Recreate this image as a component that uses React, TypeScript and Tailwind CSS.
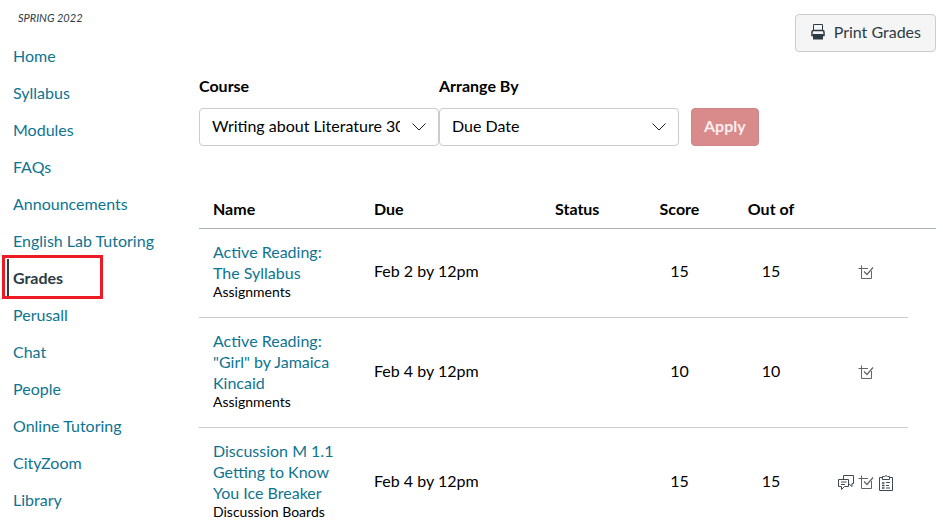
import React from "react";

const navItems = [
  "Home",
  "Syllabus",
  "Modules",
  "FAQs",
  "Announcements",
  "English Lab Tutoring",
  "Grades",
  "Perusall",
  "Chat",
  "People",
  "Online Tutoring",
  "CityZoom",
  "Library",
];

type Grade = {
  title: string;
  group: string;
  due: string;
  score: number;
  outOf: number;
  discussed?: boolean;
};

const grades: Grade[] = [
  { title: "Active Reading: The Syllabus", group: "Assignments", due: "Feb 2 by 12pm", score: 15, outOf: 15 },
  { title: 'Active Reading: "Girl" by Jamaica Kincaid', group: "Assignments", due: "Feb 4 by 12pm", score: 10, outOf: 10 },
  {
    title: "Discussion M 1.1 Getting to Know You Ice Breaker",
    group: "Discussion Boards",
    due: "Feb 4 by 12pm",
    score: 15,
    outOf: 15,
    discussed: true,
  },
];

function PrinterIcon() {
  return (
    <svg viewBox="0 0 16 16" className="size-4" fill="none" stroke="currentColor" aria-hidden="true">
      <path d="M3.5 6.500V.5h9v6" />
      <path d="M3.500 11.500H2V8q0-1.500 1.500-1.500h9Q14 6.500 14 8v3.500h-1.500" strokeWidth="1.5" />
      <path d="M3 10h10v5.500H3z" fill="currentColor" stroke="none" />
    </svg>
  );
}

function ChevronIcon() {
  return (
    <svg viewBox="0 0 16 16" className="pointer-events-none absolute top-1/2 right-3 size-4 -translate-y-1/2" fill="none" stroke="#1a1a1a" aria-hidden="true">
      <path d="M1.500 4.500 8 11l6.500-6.500" />
    </svg>
  );
}

function RubricCheckIcon() {
  return (
    <svg viewBox="0 0 16 16" className="size-4" fill="none" stroke="currentColor" aria-hidden="true">
      <path d="M.5 3.500H10M3.500.5v13h10V6" />
      <path d="m6 6.500 3 3 6-7" strokeWidth="1.2" />
    </svg>
  );
}

function CommentsIcon() {
  return (
    <svg viewBox="0 0 16 16" className="size-4" fill="none" stroke="currentColor" aria-hidden="true">
      <path d="M5.500 4.500v-4h10v8H14v3L11 9" />
      <path d="M.5 4.500h10v7H6.500l-3 3v-3h-3zM3 7h5.500M3 9.500h4" />
    </svg>
  );
}

function ClipboardIcon() {
  return (
    <svg viewBox="0 0 16 16" className="size-4" fill="none" stroke="currentColor" aria-hidden="true">
      <path d="M4.500 2.500h-3v13h13v-13h-3" />
      <path d="M4.500 4.500v-3h2q1.500-2 3 0h2v3z" />
      <path d="M4 8h2.500M4 10.500h2.500M4 13h2.500" strokeWidth="1.6" />
      <path d="M8 7.500h4M8 10.500h3M8 13h4" />
    </svg>
  );
}

function SelectField({ id, label, options }: { id: string; label: string; options: string[] }) {
  return (
    <div className="w-60">
      <label htmlFor={id} className="block leading-5 font-bold">
        {label}
      </label>
      <div className="relative mt-3">
        <select
          id={id}
          className="h-[38px] w-full appearance-none rounded border border-[#c7cdd1] bg-white pr-[38px] pb-0.5 pl-3 text-black"
        >
          {options.map((option) => (
            <option key={option}>{option}</option>
          ))}
        </select>
        <ChevronIcon />
      </div>
    </div>
  );
}

function Sidebar() {
  return (
    <nav aria-label="Course" className="w-48 shrink-0 pt-[9px]">
      <p className="pl-[18px] text-[11px] leading-[18px] text-[#2d3b45] italic">SPRING 2022</p>
      <ul className="mt-2.5">
        {navItems.map((item) =>
          item === "Grades" ? (
            <li key={item} className="relative pl-[7px]">
              <a href="#grades" aria-current="page" className="block border-l-2 border-[#2d3b45] py-2 pl-1 leading-[21px] font-bold text-[#2d3b45]">
                {item}
              </a>
              <span className="pointer-events-none absolute -top-1 left-0.5 h-11 w-[101px] border-3 border-[#ed1c24]" />
            </li>
          ) : (
            <li key={item}>
              <a href="#" className="block py-2 pl-[13px] leading-[21px] text-[#0e7490]">
                {item}
              </a>
            </li>
          ),
        )}
      </ul>
    </nav>
  );
}

function GradesTable() {
  const head = "border-b border-[#a5afb5] px-3.5 pt-[7px] pb-[9px] leading-[21px] font-bold";
  const cell = "border-b border-[#c7cdd1] px-3.5 pt-3 pb-4";
  return (
    <table id="grades" className="mt-[45px] w-full table-fixed border-separate border-spacing-0">
      <colgroup>
        <col className="w-[161px]" />
        <col />
        <col className="w-[93px]" />
        <col className="w-[91px]" />
        <col className="w-[92px]" />
        <col className="w-[91px]" />
        <col className="w-7" />
      </colgroup>
      <thead>
        <tr>
          <th scope="col" className={`${head} text-left`}>Name</th>
          <th scope="col" className={`${head} text-left`}>Due</th>
          <th scope="col" className={`${head} text-left`}>Status</th>
          <th scope="col" className={`${head} text-center`}>Score</th>
          <th scope="col" className={`${head} text-center`}>Out of</th>
          <td colSpan={2} className="border-b border-[#a5afb5]" />
        </tr>
      </thead>
      <tbody>
        {grades.map((grade) => (
          <tr key={grade.title}>
            <th scope="row" className={`${cell} text-left font-normal`}>
              <a href="#" className="block leading-[21px] text-[#0e7490]">
                {grade.title}
              </a>
              <div className="text-sm leading-[18px] whitespace-nowrap">{grade.group}</div>
            </th>
            <td className={cell}>{grade.due}</td>
            <td className={cell} />
            <td className={`${cell} text-center`}>{grade.score}</td>
            <td className={`${cell} text-center`}>{grade.outOf}</td>
            <td className="border-b border-[#c7cdd1] p-3.5">
              <div className="grid grid-cols-[repeat(3,16px)] justify-end gap-1 text-[#5f666b]">
                {grade.discussed && (
                  <button type="button" aria-label="Comments" className="text-[#3f4a52]">
                    <CommentsIcon />
                  </button>
                )}
                <button type="button" aria-label="Score details" className="col-start-2">
                  <RubricCheckIcon />
                </button>
                {grade.discussed && (
                  <button type="button" aria-label="Rubric" className="text-[#3f4a52]">
                    <ClipboardIcon />
                  </button>
                )}
              </div>
            </td>
          </tr>
        ))}
      </tbody>
    </table>
  );
}

export default function App() {
  return (
    <div className="flex bg-white font-['Lato','Open_Sans',sans-serif] text-base text-black">
      <Sidebar />
      <main className="min-w-0 flex-1 px-[7px] pt-3.5">
        <div className="flex justify-end">
          <button
            type="button"
            className="flex h-[38px] items-center gap-2 rounded border border-[#c7cdd1] bg-[#f5f5f5] px-3.5 pb-0.5 text-[#2d3b45]"
          >
            <PrinterIcon />
            Print Grades
          </button>
        </div>
        <form className="mt-6 flex items-end" onSubmit={(event) => event.preventDefault()}>
          <SelectField id="course" label="Course" options={["Writing about Literature 300"]} />
          <SelectField id="arrange" label="Arrange By" options={["Due Date", "Name", "Module", "Assignment Group"]} />
          <button
            type="submit"
            className="ml-3 h-[38px] rounded border border-[#cc8689] bg-[#d98b8b] px-3 pb-0.5 font-bold text-[#fbeeee]"
          >
            Apply
          </button>
        </form>
        <GradesTable />
      </main>
    </div>
  );
}
